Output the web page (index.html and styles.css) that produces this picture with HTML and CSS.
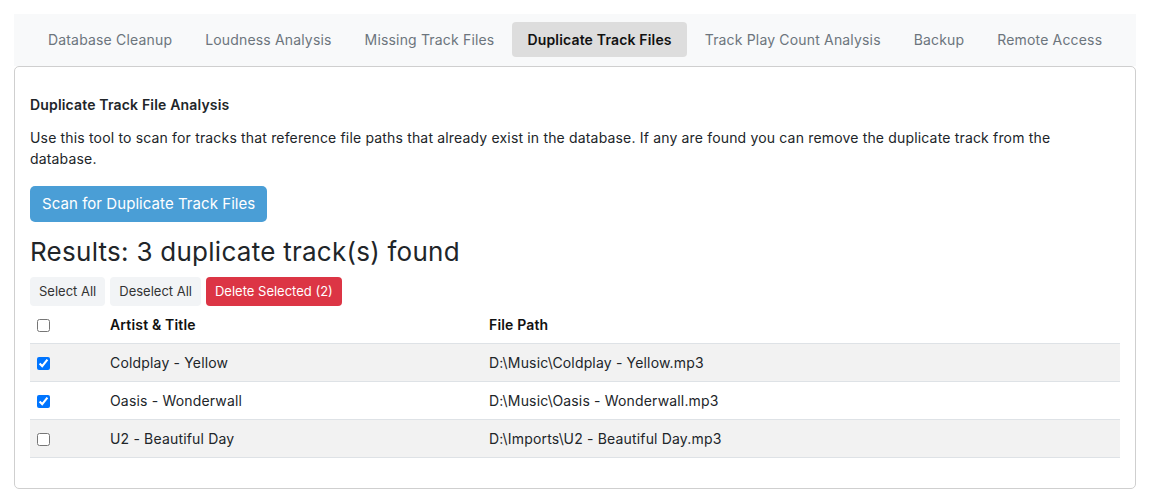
FILE: index.html
```html
<!DOCTYPE html>
<html lang="en">
<head>
<meta charset="utf-8">
<title>Duplicate Track Files</title>
<link rel="stylesheet" href="styles.css">
</head>
<body>
<div class="page">
  <nav class="tabs">
    <a class="tab">Database Cleanup</a>
    <a class="tab">Loudness Analysis</a>
    <a class="tab">Missing Track Files</a>
    <a class="tab active">Duplicate Track Files</a>
    <a class="tab">Track Play Count Analysis</a>
    <a class="tab">Backup</a>
    <a class="tab">Remote Access</a>
  </nav>
  <section class="card">
    <h3 class="card-title">Duplicate Track File Analysis</h3>
    <p class="desc">Use this tool to scan for tracks that reference file paths that already exist in the database. If any are found you can remove the duplicate track from the database.</p>
    <button class="btn btn-primary">Scan for Duplicate Track Files</button>
    <h2 class="results">Results: 3 duplicate track(s) found</h2>
    <div class="actions">
      <button class="btn-sm btn-light">Select All</button>
      <button class="btn-sm btn-light">Deselect All</button>
      <button class="btn-sm btn-danger">Delete Selected (2)</button>
    </div>
    <table class="tbl">
      <colgroup>
        <col class="c-check">
        <col class="c-title">
        <col class="c-path">
      </colgroup>
      <thead>
        <tr><th><input type="checkbox"></th><th>Artist &amp; Title</th><th>File Path</th></tr>
      </thead>
      <tbody>
        <tr class="odd"><td><input type="checkbox" checked></td><td>Coldplay - Yellow</td><td>D:\Music\Coldplay - Yellow.mp3</td></tr>
        <tr><td><input type="checkbox" checked></td><td>Oasis - Wonderwall</td><td>D:\Music\Oasis - Wonderwall.mp3</td></tr>
        <tr class="odd"><td><input type="checkbox"></td><td>U2 - Beautiful Day</td><td>D:\Imports\U2 - Beautiful Day.mp3</td></tr>
      </tbody>
    </table>
  </section>
</div>
</body>
</html>
```
FILE: styles.css
```css
* { box-sizing: border-box; }
html, body { margin: 0; padding: 0; background: #fff; }
body {
  font-family: Inter, "Noto Sans", "Liberation Sans", sans-serif;
  color: #212529;
  font-size: 14px;
  letter-spacing: 0.012em;
}
.page { padding: 14px; }
.tabs {
  display: flex;
  gap: 3px;
  background: #f8f9fa;
  padding: 8px 19px 9px;
}
.tab {
  flex: none;
  white-space: nowrap;
  font-size: 14px;
  line-height: 20px;
  padding: 7.5px 15px;
  color: #6c757d;
  border-radius: 4px;
  cursor: pointer;
}
.tab.active {
  background: #dddddd;
  color: #111;
  font-weight: 600;
}
.card {
  border: 1px solid #cfcfcf;
  border-radius: 5px;
  padding: 27px 15px 30px;
}
.card-title {
  margin: 0 0 12px;
  font-size: 14px;
  font-weight: 600;
  line-height: 21px;
}
.desc {
  margin: 0 0 17px;
  line-height: 21px;
}
.btn {
  font-family: inherit;
  letter-spacing: 0.004em;
  border: none;
  cursor: pointer;
}
.btn-primary {
  display: block;
  background: #4a9ed6;
  color: #fff;
  font-size: 15px;
  line-height: 20px;
  padding: 8px 12px;
  border-radius: 5px;
}
.results {
  margin: 14px 0 10px;
  font-size: 26px;
  font-weight: 400;
  line-height: 31px;
  letter-spacing: 0.01em;
}
.actions {
  display: flex;
  gap: 5px;
}
.btn-sm {
  font-family: inherit;
  letter-spacing: 0;
  font-size: 13px;
  line-height: 19px;
  padding: 5px 9px;
  border: none;
  border-radius: 4px;
  cursor: pointer;
}
.btn-light { background: #f2f4f6; color: #333; }
.btn-danger { background: #dc3545; color: #fff; }
.tbl {
  width: 100%;
  border-collapse: collapse;
  table-layout: fixed;
}
.c-check { width: 72px; }
.c-title { width: 379px; }
.tbl th, .tbl td {
  text-align: left;
  padding: 8px 8px;
  line-height: 21px;
  font-size: 14px;
  border-bottom: 1px solid #dee2e6;
  vertical-align: middle;
}
.tbl th { font-weight: 600; color: #111; }
.tbl tr.odd td { background: #f2f2f2; }
.tbl input[type=checkbox] { margin: -2px 0 0 -1px; vertical-align: middle; width: 13px; height: 13px; }
```
